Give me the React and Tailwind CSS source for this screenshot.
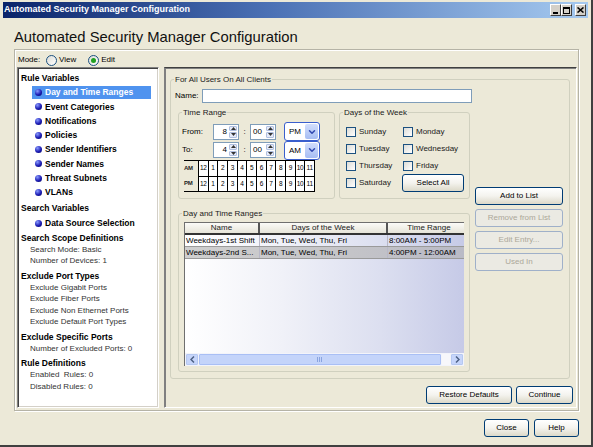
import { ChevronDown } from 'lucide-react'

const FONT = { fontFamily: '"Liberation Sans", Arial, sans-serif' }

const ruleVars = ['Day and Time Ranges', 'Event Categories', 'Notifications', 'Policies', 'Sender Identifiers', 'Sender Names', 'Threat Subnets', 'VLANs']
const hours = ['12', '1', '2', '3', '4', '5', '6', '7', '8', '9', '10', '11']

function XPButton({ children, className = '', disabled }) {
  return (
    <div
      className={`flex h-[18px] items-center justify-center rounded-[3px] border text-[8px] ${
        disabled ? 'border-[#9fb0c9] bg-[#ebeae3] text-[#aca899]' : 'border-[#003c74] bg-linear-to-b from-white via-[#f4f3ee] to-[#dcd9c9] text-black'
      } ${className}`}
    >
      {children}
    </div>
  )
}

function GroupBox({ label, className = '', children }) {
  return (
    <div className={`relative rounded-[3px] border border-[#d0d0bf] ${className}`}>
      <span className="absolute -top-[6px] left-[3px] bg-[#ECE9D8] px-[1px] text-[8px] leading-[11px] text-[#1a1a1a]">{label}</span>
      {children}
    </div>
  )
}

function Bullet() {
  return <span className="h-[7px] w-[7px] shrink-0 rounded-full bg-[radial-gradient(circle_at_35%_30%,#8a9cff,#1c1cb4_55%,#00005a)]" />
}

function Spin({ value, right }) {
  return (
    <div className="flex h-[16px] w-[26px] border border-[#7f9db9] bg-white">
      <div className={`flex-1 px-[2px] text-[8px] leading-[14px] ${right ? 'text-right' : 'text-left'}`}>{value}</div>
      <div className="flex w-[9px] flex-col gap-[1px] py-[1px] pr-[1px]">
        <div className="flex flex-1 items-center justify-center rounded-[1px] border border-[#b0bfe0] bg-[#e6ebf8]">
          <svg width="5" height="3" viewBox="0 0 5 3"><path d="M0 3 L2.5 0 L5 3 Z" fill="#333" /></svg>
        </div>
        <div className="flex flex-1 items-center justify-center rounded-[1px] border border-[#b0bfe0] bg-[#e6ebf8]">
          <svg width="5" height="3" viewBox="0 0 5 3"><path d="M0 0 L2.5 3 L5 0 Z" fill="#333" /></svg>
        </div>
      </div>
    </div>
  )
}

function Combo({ value }) {
  return (
    <div className="flex h-[19px] w-[36px] rounded-[3px] border border-[#3a5fcd] bg-white p-[1px]">
      <span className="flex-1 pl-[3px] text-[8px] leading-[15px]">{value}</span>
      <span className="flex w-[13px] items-center justify-center rounded-[2px] bg-linear-to-b from-[#d2defc] to-[#a6bdf3]">
        <ChevronDown size={10} strokeWidth={3.5} color="#3048b0" />
      </span>
    </div>
  )
}

function Check({ label }) {
  return (
    <div className="flex h-[17px] items-center gap-[3px]">
      <span className="h-[10px] w-[10px] border border-[#1c5180] bg-linear-to-br from-[#dcdcd7] to-white" />
      <span className="text-[8px] text-[#1a1a1a]">{label}</span>
    </div>
  )
}

function Radio({ checked, label, className = '' }) {
  return (
    <div className={`flex items-center gap-[2px] ${className}`}>
      <span className="flex h-[11px] w-[11px] items-center justify-center rounded-full border border-[#1c5180] bg-linear-to-br from-[#dcdcd7] to-white">
        {checked && <span className="h-[5px] w-[5px] rounded-full bg-[#21a121]" />}
      </span>
      <span className="text-[8px]">{label}</span>
    </div>
  )
}

function HourRow({ label }) {
  return (
    <div className="flex h-[14.5px] items-center">
      <span className="w-[14px] text-[6px] font-bold tracking-[-0.3px] text-[#222]">{label}</span>
      <div className="grid h-full w-[117px] grid-cols-12 border-l border-black">
        {hours.map((h) => (
          <div key={h} className="flex items-center justify-center border-r border-black bg-white text-[6.5px] tracking-[-0.3px]">{h}</div>
        ))}
      </div>
    </div>
  )
}

function LeftPanel() {
  const sub = 'h-[11.5px] pl-[12px] text-[8px] leading-[11.5px] text-[#333]'
  const head = 'mt-[4px] h-[11px] pl-[3px] text-[8.5px] font-bold leading-[11px] text-black'
  return (
    <div className="h-[341px] w-[142px] border border-b-white border-l-[#808080] border-r-white border-t-[#808080] bg-white shadow-[inset_1px_1px_0_#404040,inset_-1px_-1px_0_#d4d0c8]">
      <div className="pt-[0.5px]">
        <div className="mt-[4px] h-[11px] pl-[3px] text-[8.5px] font-bold leading-[11px]">Rule Variables</div>
        <div className="mt-[2px]">
          {ruleVars.map((r, i) => (
            <div key={r} className="flex h-[14.25px] items-center">
              <div className={`ml-[14px] flex h-[13.5px] w-[119px] items-center gap-[3px] pl-[3px] ${i === 0 ? 'bg-[#4f93ef] text-white' : 'text-black'}`}>
                <Bullet />
                <span className="text-[8.5px] font-bold">{r}</span>
              </div>
            </div>
          ))}
        </div>
        <div className="mt-[3px] h-[11px] pl-[3px] text-[8.5px] font-bold leading-[11px]">Search Variables</div>
        <div className="mt-[2.5px] flex h-[14px] items-center">
          <div className="ml-[14px] flex items-center gap-[3px] pl-[3px]">
            <Bullet />
            <span className="text-[8.5px] font-bold">Data Source Selection</span>
          </div>
        </div>
        <div className="mt-[2.5px] h-[11px] pl-[3px] text-[8.5px] font-bold leading-[11px]">Search Scope Definitions</div>
        <div className={sub}>Search Mode: Basic</div>
        <div className={sub}>Number of Devices: 1</div>
        <div className={head}>Exclude Port Types</div>
        <div className={sub}>Exclude Gigabit Ports</div>
        <div className={sub}>Exclude Fiber Ports</div>
        <div className={sub}>Exclude Non Ethernet Ports</div>
        <div className={sub}>Exclude Default Port Types</div>
        <div className={head}>Exclude Specific Ports</div>
        <div className={sub}>Number of Excluded Ports: 0</div>
        <div className={head}>Rule Definitions</div>
        <div className={sub}>Enabled&nbsp; Rules: 0</div>
        <div className={sub}>Disabled Rules: 0</div>
      </div>
    </div>
  )
}

function RangesTable() {
  const rows = [
    ['Weekdays-1st Shift', 'Mon, Tue, Wed, Thu, Fri', '8:00AM - 5:00PM'],
    ['Weekdays-2nd S...', 'Mon, Tue, Wed, Thu, Fri', '4:00PM - 12:00AM'],
  ]
  return (
    <div className="ml-[5px] mt-[8px] flex h-[144px] w-[280px] flex-col border-l border-t border-[#6f6f6f] bg-[linear-gradient(90deg,#ffffff_0%,#f0f1f8_35%,#dcdff0_70%,#c6cae7_100%)] text-[8px]">
      <div className="flex h-[12px] border-b-2 border-[#333] bg-linear-to-b from-[#fbfbf8] to-[#e6e4d8] text-[8px] leading-[10px] text-[#222]">
        <div className="w-[75px] border-r-2 border-[#555] text-center">Name</div>
        <div className="w-[128px] border-r-2 border-[#555] text-center">Days of the Week</div>
        <div className="flex-1 pl-[6px] text-center">Time Range</div>
      </div>
      {rows.map((r, i) => (
        <div key={r[0]} className={`flex h-[12px] border-b border-[#9a9a9a] leading-[11px] text-black ${i === 1 ? 'bg-[linear-gradient(90deg,#cfcfcf,#c4c4c8_60%,#b9bac6)]' : ''}`}>
          <div className="w-[75px] overflow-hidden whitespace-nowrap border-r border-[#b8b8c8] pl-[1px]">{r[0]}</div>
          <div className="w-[128px] whitespace-nowrap border-r border-[#b8b8c8] pl-[1px]">{r[1]}</div>
          <div className="flex-1 whitespace-nowrap pl-[1px]">{r[2]}</div>
        </div>
      ))}
      <div className="flex-1" />
      <div className="flex h-[13px] items-center gap-[1px] bg-[#f3f4fa] px-[1px] py-[1px]">
        <div className="flex h-full w-[12px] items-center justify-center rounded-[1px] border border-[#b5c8f1] bg-[#c6d5fb]">
          <svg width="5" height="7" viewBox="0 0 5 7"><path d="M4 0.5 L1 3.5 L4 6.5" stroke="#4d6185" strokeWidth="1.5" fill="none" /></svg>
        </div>
        <div className="flex h-full w-[242px] items-center justify-center rounded-[1px] border border-[#a9bff5] bg-[#c4d4fa]">
          <svg width="6" height="5" viewBox="0 0 6 5"><path d="M0.5 0 V5 M2.5 0 V5 M4.5 0 V5" stroke="#8aa4e0" strokeWidth="1" /></svg>
        </div>
        <div className="h-full flex-1 bg-[#f7f7fb]" />
        <div className="flex h-full w-[12px] items-center justify-center rounded-[1px] border border-[#b5c8f1] bg-[#c6d5fb]">
          <svg width="5" height="7" viewBox="0 0 5 7"><path d="M1 0.5 L4 3.5 L1 6.5" stroke="#4d6185" strokeWidth="1.5" fill="none" /></svg>
        </div>
      </div>
    </div>
  )
}

function RightPanel() {
  return (
    <div className="flex h-[341px] w-[413px] flex-col border border-b-white border-l-[#808080] border-r-white border-t-[#404040] shadow-[inset_1px_1px_0_#808080]">
      <GroupBox label="For All Users On All Clients" className="ml-[5px] mt-[11px] flex h-[300px] w-[400px]">
        <div className="ml-[4px] mt-[9px] flex flex-col">
          <div className="flex h-[14px] items-center">
            <span className="w-[27px] text-[8px]">Name:</span>
            <div className="h-[14px] w-[270px] border border-[#7f9db9] bg-white" />
          </div>
          <div className="ml-[3px] mt-[9px] flex gap-[4px]">
            <GroupBox label="Time Range" className="h-[87px] w-[157px]">
              <div className="ml-[3px] mt-[9px] flex h-[19px] items-center">
                <span className="w-[31px] text-[8px]">From:</span>
                <Spin value="8" right />
                <span className="w-[11px] text-center text-[8px]">:</span>
                <Spin value="00" />
                <span className="w-[8px]" />
                <Combo value="PM" />
              </div>
              <div className="ml-[3px] flex h-[18px] items-center">
                <span className="w-[31px] text-[8px]">To:</span>
                <Spin value="4" right />
                <span className="w-[11px] text-center text-[8px]">:</span>
                <Spin value="00" />
                <span className="w-[8px]" />
                <Combo value="AM" />
              </div>
              <div className="ml-[5px] mt-[1px] flex w-[131px] flex-col border-b border-t border-black">
                <HourRow label="AM" />
                <div className="ml-[14px] border-t border-black" />
                <HourRow label="PM" />
              </div>
            </GroupBox>
            <GroupBox label="Days of the Week" className="h-[87px] w-[131px]">
              <div className="ml-[6px] mt-[10px] grid grid-cols-[57px_1fr]">
                <Check label="Sunday" />
                <Check label="Monday" />
                <Check label="Tuesday" />
                <Check label="Wednesday" />
                <Check label="Thursday" />
                <Check label="Friday" />
                <Check label="Saturday" />
                <div className="flex h-[17px] items-center">
                  <XPButton className="-ml-[1px] h-[16px] w-[62px]">Select All</XPButton>
                </div>
              </div>
            </GroupBox>
          </div>
          <GroupBox label="Day and Time Ranges" className="ml-[3px] mt-[14px] h-[159px] w-[292px]">
            <RangesTable />
          </GroupBox>
        </div>
        <div className="ml-[3px] mt-[107px] flex w-[88px] flex-col gap-[4px]">
          <XPButton>Add to List</XPButton>
          <XPButton disabled>Remove from List</XPButton>
          <XPButton disabled>Edit Entry...</XPButton>
          <XPButton disabled>Used In</XPButton>
        </div>
      </GroupBox>
      <div className="mt-[7px] flex justify-end gap-[4px] pr-[3px]">
        <XPButton className="w-[86px]">Restore Defaults</XPButton>
        <XPButton className="w-[57px]">Continue</XPButton>
      </div>
    </div>
  )
}

function TitleButton({ children, className = '' }) {
  return (
    <div className={`flex h-[12px] w-[11px] items-center justify-center border border-b-[#404040] border-l-white border-r-[#404040] border-t-white bg-[#d4d0c8] ${className}`}>
      {children}
    </div>
  )
}

export default function App() {
  return (
    <div style={FONT} className="h-[447px] w-[593px] overflow-hidden border-b-2 border-r-2 border-b-[#404040] border-r-[#404040] bg-[#ECE9D8] px-[3px] pt-[2px] text-black">
      <div className="flex h-[16px] items-center justify-between bg-[linear-gradient(90deg,#0a246a_0%,#4a70b4_45%,#a6caf0_100%)] pl-[1px] pr-[2px]">
        <span className="text-[9px] font-bold text-white">Automated Security Manager Configuration</span>
        <div className="flex items-center">
          <TitleButton>
            <span className="mt-[6px] h-[2px] w-[5px] bg-black" />
          </TitleButton>
          <TitleButton>
            <span className="h-[7px] w-[7px] border border-t-2 border-black" />
          </TitleButton>
          <TitleButton className="ml-[3px]">
            <svg width="7" height="6" viewBox="0 0 7 6"><path d="M0.5 0.5 L6.5 5.5 M6.5 0.5 L0.5 5.5" stroke="#000" strokeWidth="1.6" /></svg>
          </TitleButton>
        </div>
      </div>
      <div className="h-[31px] pl-[11px] pt-[9px] text-[14.8px] leading-[20px] text-[#111]">Automated Security Manager Configuration</div>
      <div className="ml-[11px] h-[362px] w-[565px] border border-[#b5b3a6] shadow-[1px_1px_0_white,inset_1px_1px_0_white]">
        <div className="flex h-[17px] items-center gap-[3px] pl-[3px] pt-[3px]">
          <span className="w-[25px] text-[8px]">Mode:</span>
          <Radio label="View" />
          <Radio checked label="Edit" className="ml-[9px]" />
        </div>
        <div className="flex gap-[5px] pl-[2px]">
          <LeftPanel />
          <RightPanel />
        </div>
      </div>
      <div className="mt-[8px] flex justify-end gap-[5px] pr-[9px]">
        <XPButton className="w-[45px]">Close</XPButton>
        <XPButton className="w-[45px]">Help</XPButton>
      </div>
    </div>
  )
}
